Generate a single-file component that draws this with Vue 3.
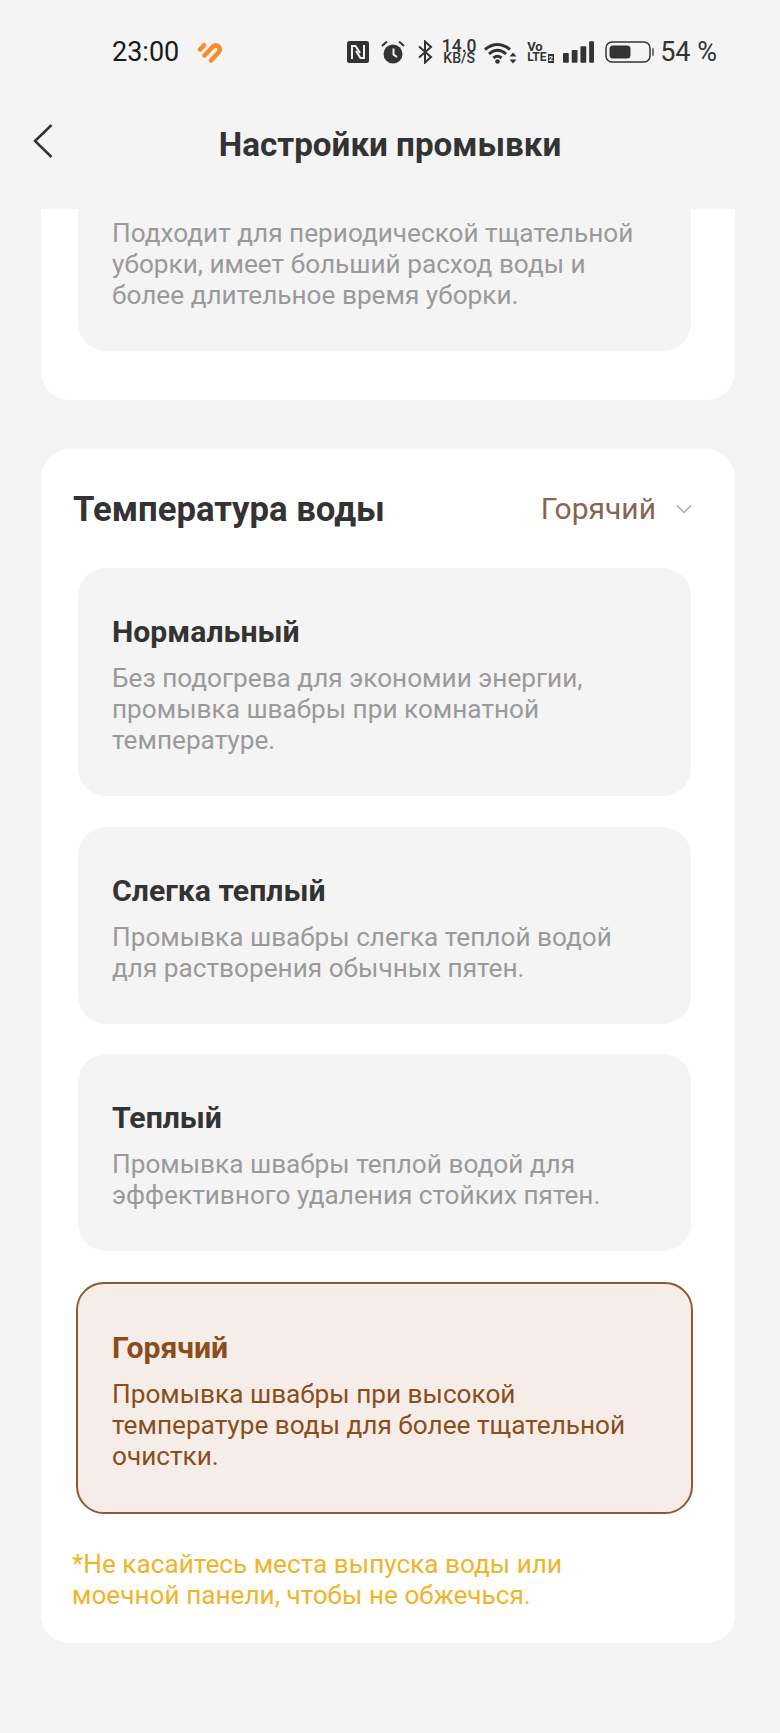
<script setup>
const options = [
  { title: 'Нормальный', lines: ['Без подогрева для экономии энергии,', 'промывка швабры при комнатной', 'температуре.'] },
  { title: 'Слегка теплый', lines: ['Промывка швабры слегка теплой водой', 'для растворения обычных пятен.'] },
  { title: 'Теплый', lines: ['Промывка швабры теплой водой для', 'эффективного удаления стойких пятен.'] },
  { title: 'Горячий', active: true, lines: ['Промывка швабры при высокой', 'температуре воды для более тщательной', 'очистки.'] },
]
</script>

<template>
  <div class="page">
    <div class="status">
      <span class="time">23:00</span>
      <svg class="app-icon" width="25" height="21" viewBox="0 0 25 21">
        <path d="M3 7.500 L7 3.200 M7.500 13.500 L15.500 5 Q18 2.500 21 4 Q24.300 7 21.500 10.500 L14 18.500" fill="none" stroke="#f58f2e" stroke-width="4.600" stroke-linecap="round" stroke-linejoin="round"/>
      </svg>
      <div class="status-right">
        <svg class="nfc" width="22" height="22" viewBox="0 0 22 22">
          <rect width="22" height="22" rx="2.500" fill="#333"/>
          <path d="M5 18V5h3.500L13 12M17 4v13h-3.500L9 10" fill="none" stroke="#f4f4f4" stroke-width="2"/>
        </svg>
        <svg class="alarm" width="24" height="24" viewBox="0 0 24 24">
          <circle cx="12" cy="14" r="9.500" fill="#333"/>
          <path d="M12.500 8.500v6l3.500 2.500" fill="none" stroke="#f4f4f4" stroke-width="2"/>
          <path d="M1 6l5-4.500M23 6l-5-4.500" stroke="#333" stroke-width="2" fill="none"/>
        </svg>
        <svg class="bt" width="16" height="24" viewBox="0 0 16 24">
          <path d="M2 6.500 14 17 8 22.500V1.500L14 7 2 17.500" fill="none" stroke="#333" stroke-width="2"/>
        </svg>
        <div class="speed"><span class="speed-num">14.0</span><span class="speed-unit">KB/S</span></div>
        <svg class="wifi" width="33" height="23" viewBox="0 0 33 23">
          <path d="M1 8.500Q13.500 -1.500 26 8.500M5 13Q13.500 5.500 22 13M9.500 17Q13.500 13.500 17.500 17" fill="none" stroke="#333" stroke-width="3"/>
          <circle cx="13.500" cy="20.500" r="2.300" fill="#333"/>
          <path d="M29 11.500l3.500 4h-7zM29 22.500l3.500-4h-7z" fill="#333"/>
        </svg>
        <div class="volte"><span>Vo</span><span class="lte">LTE<i>2</i></span></div>
        <svg class="signal" width="31" height="22" viewBox="0 0 32 22">
          <rect x="0" y="12" width="6" height="10" rx="1" fill="#333"/>
          <rect x="9" y="9" width="6" height="13" rx="1" fill="#333"/>
          <rect x="18" y="5" width="6" height="17" rx="1" fill="#333"/>
          <rect x="27" y="0" width="5" height="22" rx="1" fill="#333"/>
        </svg>
        <svg class="battery" width="49" height="22" viewBox="0 0 49 22">
          <rect x="1" y="1" width="44" height="20" rx="6" fill="none" stroke="#333" stroke-width="1.500"/>
          <rect x="4.500" y="4.500" width="21" height="13" rx="3.500" fill="#333"/>
          <rect x="47" y="7" width="2" height="8" rx="1" fill="#777"/>
        </svg>
        <span class="pct">54 %</span>
      </div>
    </div>

    <header class="nav">
      <svg class="back" width="20" height="34" viewBox="0 0 20 34"><path d="M18.500 1 2 17 18.500 33" fill="none" stroke="#333" stroke-width="2.500"/></svg>
      <h1>Настройки промывки</h1>
    </header>

    <main class="content">
      <section class="card card-first">
        <div class="option option-clipped">
          <p class="desc">Подходит для периодической тщательной</p>
          <p class="desc">уборки, имеет больший расход воды и</p>
          <p class="desc">более длительное время уборки.</p>
        </div>
      </section>

      <section class="card card-temp">
        <div class="card-head">
          <h2>Температура воды</h2>
          <div class="picker">
            <span>Горячий</span>
            <svg width="16" height="10" viewBox="0 0 16 10"><path d="M1 1.500 8 8.500 15 1.500" fill="none" stroke="#aaa" stroke-width="1.500"/></svg>
          </div>
        </div>
        <div class="options">
          <div v-for="o in options" :key="o.title" class="option" :class="{ active: o.active }">
            <h3>{{ o.title }}</h3>
            <p v-for="l in o.lines" :key="l" class="desc">{{ l }}</p>
          </div>
        </div>
        <p class="warn">*Не касайтесь места выпуска воды или</p>
        <p class="warn">моечной панели, чтобы не обжечься.</p>
      </section>
    </main>
  </div>
</template>

<style>
html, body { margin: 0; background: #f4f4f4; }
</style>

<style scoped>
.page {
  width: 780px;
  height: 1733px;
  overflow: hidden;
  background: #f4f4f4;
  font-family: Roboto, "Noto Sans", sans-serif;
  color: #333;
}
p, h1, h2, h3 { margin: 0; }

.status {
  height: 72px;
  padding: 32px 63px 0 112px;
  box-sizing: border-box;
  display: flex;
  align-items: center;
}
.time { font-size: 27px; color: #1a1a1a; }
.app-icon { margin-left: 18px; }
.status-right { margin-left: auto; display: flex; align-items: center; }
.alarm { margin-left: 12px; }
.bt { margin-left: 12px; }
.speed { margin-left: 8px; width: 36px; display: flex; flex-direction: column; align-items: center; }
.speed-num { font-size: 17.500px; line-height: 13px; font-weight: 500; }
.speed-unit { font-size: 14px; line-height: 11px; font-weight: 500; }
.wifi { margin-left: 7px; }
.volte { margin-left: 10px; width: 25px; display: flex; flex-direction: column; font-weight: 700; font-size: 13px; line-height: 11px; }
.lte { white-space: nowrap; font-size: 12px; }
.volte i { font-style: normal; font-size: 8px; background: #333; color: #f4f4f4; padding: 0 1px; margin-left: 1px; }
.signal { margin-left: 11px; }
.battery { margin-left: 11px; }
.pct { margin-left: 6px; font-size: 27px; color: #333; }

.nav {
  height: 137px;
  position: relative;
  display: flex;
  justify-content: center;
  box-sizing: border-box;
  padding-top: 53px;
}
.nav h1 { font-size: 33.200px; font-weight: 700; line-height: 40px; }
.back { position: absolute; left: 33px; top: 52px; }

.content { padding: 0 45px 0 41px; display: flex; flex-direction: column; gap: 49px; }
.card { background: #fff; border-radius: 28px; }
.card-first { border-radius: 0 0 28px 28px; padding: 0 44px 49px 37px; }
.card-temp { padding: 0 44px 35px 31px; height: 1194px; box-sizing: border-box; }

.card-head {
  height: 119px;
  display: flex;
  align-items: center;
  justify-content: space-between;
  padding-left: 1px;
  margin-right: -1px;
}
.card-head h2 { font-size: 34.700px; font-weight: 700; }
.picker { display: flex; align-items: center; gap: 20px; color: #8a6450; font-size: 30px; }

.options { display: flex; flex-direction: column; gap: 30.500px; margin-left: 6px; }
.option {
  background: #f4f4f4;
  border-radius: 28px;
  padding: 45px 35px 40px 34px;
  box-sizing: border-box;
}
.option-clipped { border-radius: 0 0 28px 28px; padding: 9px 35px 40px 34px; }
.option h3 { font-size: 30.200px; font-weight: 700; line-height: 38px; margin-bottom: 12px; color: #333; }
.desc { font-size: 26.200px; line-height: 31px; color: #9a9a9a; white-space: nowrap; }
.option.active {
  margin: 0 -2px;
  background: #f7ede8;
  border: 2px solid #8f5a32;
}
.option.active h3 { color: #8a4e1c; }
.option.active .desc { color: #8a4e1c; }
.warn { font-size: 26.200px; line-height: 31px; color: #f2b32a; white-space: nowrap; }
.options + .warn { margin-top: 35px; }
</style>
